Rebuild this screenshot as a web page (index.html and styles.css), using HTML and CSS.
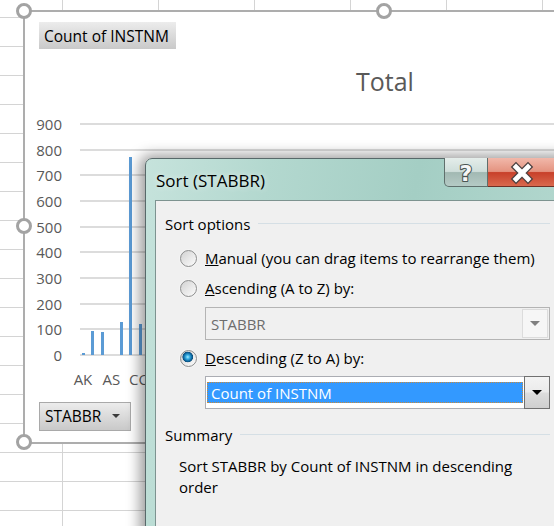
FILE: index.html
```html
<!DOCTYPE html>
<html lang="en">
<head>
    <meta charset="UTF-8">
    <meta name="viewport" content="width=device-width, initial-scale=1.0">
    <title>Sort (STABBR)</title>
    <link rel="stylesheet" href="styles.css">
</head>
<body>

    <div class="sheet">

        <!-- Pivot chart floating on the worksheet -->
        <div class="chart">
            <span class="handle handle-tl"></span>
            <span class="handle handle-tc"></span>
            <span class="handle handle-ml"></span>
            <span class="handle handle-bl"></span>

            <div class="field-btn">Count of INSTNM</div>
            <div class="chart-title">Total</div>

            <div class="axis">
                <div class="axis-row"><span class="axis-label">900</span><span class="grid-line"></span></div>
                <div class="axis-row"><span class="axis-label">800</span><span class="grid-line"></span></div>
                <div class="axis-row"><span class="axis-label">700</span><span class="grid-line"></span></div>
                <div class="axis-row"><span class="axis-label">600</span><span class="grid-line"></span></div>
                <div class="axis-row"><span class="axis-label">500</span><span class="grid-line"></span></div>
                <div class="axis-row"><span class="axis-label">400</span><span class="grid-line"></span></div>
                <div class="axis-row"><span class="axis-label">300</span><span class="grid-line"></span></div>
                <div class="axis-row"><span class="axis-label">200</span><span class="grid-line"></span></div>
                <div class="axis-row"><span class="axis-label">100</span><span class="grid-line"></span></div>
                <div class="axis-row"><span class="axis-label">0</span><span class="grid-line"></span></div>

                <div class="bars">
                    <div class="bar-slot"><span class="bar" style="height:2px"></span></div>
                    <div class="bar-slot"><span class="bar" style="height:24px"></span></div>
                    <div class="bar-slot"><span class="bar" style="height:23px"></span></div>
                    <div class="bar-slot"><span class="bar" style="height:0px"></span></div>
                    <div class="bar-slot"><span class="bar" style="height:33px"></span></div>
                    <div class="bar-slot"><span class="bar" style="height:198px"></span></div>
                    <div class="bar-slot"><span class="bar" style="height:31px"></span></div>
                    <div class="bar-slot"><span class="bar" style="height:10px"></span></div>
                    <div class="bar-slot"><span class="bar" style="height:40px"></span></div>
                </div>
            </div>

            <div class="x-labels">
                <span>AK</span><span>AS</span><span>CO</span><span>FL</span><span>GU</span>
            </div>

            <div class="field-btn field-btn-drop">STABBR <span class="caret"></span></div>
        </div>

        <!-- Sort dialog -->
        <div class="dialog">
            <div class="titlebar">
                <span class="title">Sort (STABBR)</span>
                <div class="caption-btns">
                    <span class="cap-btn cap-help">
                        <svg width="44" height="28" viewBox="0 0 44 28">
                            <text x="21" y="23" text-anchor="middle" font-family="DejaVu Sans, sans-serif" font-weight="bold" font-size="22" fill="#f6f6f6" stroke="#4a5553" stroke-width="2.2" stroke-linejoin="round" paint-order="stroke">?</text>
                        </svg>
                    </span>
                    <span class="cap-btn cap-close">
                        <svg width="70" height="28" viewBox="0 0 70 28">
                            <path d="M28 9 L40 21 M40 9 L28 21" stroke="#4a3f3f" stroke-width="7.4" stroke-linecap="square"/>
                            <path d="M28 9 L40 21 M40 9 L28 21" stroke="#ffffff" stroke-width="4.8" stroke-linecap="square"/>
                        </svg>
                    </span>
                </div>
            </div>

            <div class="client">
                <div class="group-head"><span>Sort options</span><span class="rule"></span></div>

                <div class="option option-first"><span class="radio"></span><span><u>M</u>anual (you can drag items to rearrange them)</span></div>
                <div class="option"><span class="radio"></span><span><u>A</u>scending (A to Z) by:</span></div>
                <div class="combo combo-disabled">
                    <span class="combo-text">STABBR</span>
                    <span class="combo-btn"><span class="tri"></span></span>
                </div>

                <div class="option option-after-combo"><span class="radio radio-on"></span><span><u>D</u>escending (Z to A) by:</span></div>
                <div class="combo combo-focus">
                    <span class="combo-text"><span class="selected">Count of INSTNM</span></span>
                    <span class="combo-btn"><span class="tri"></span></span>
                </div>

                <div class="group-head group-summary"><span>Summary</span><span class="rule"></span></div>
                <p class="summary">Sort STABBR by Count of INSTNM in descending<br>order</p>
            </div>
        </div>

    </div>

</body>
</html>
```

FILE: styles.css
```css
/* Basic reset */
* {
    margin: 0;
    padding: 0;
    box-sizing: border-box;
}

body {
    width: 554px;
    height: 526px;
    overflow: hidden;
    background: #ffffff;
    font-family: "Open Sans", "Noto Sans", sans-serif;
}

/* Worksheet with cell gridlines */
.sheet {
    position: relative;
    width: 554px;
    height: 526px;
    overflow: hidden;
    background-color: #ffffff;
    background-image:
        linear-gradient(to right, #d4d4d4 1px, transparent 1px),
        linear-gradient(to bottom, #d4d4d4 1px, transparent 1px);
    background-size: 96px 29px;
    background-position: 62px 17px;
}

/* Chart object */
.chart {
    position: absolute;
    left: 23px;
    top: 10px;
    width: 723px;
    height: 434px;
    background: #ffffff;
    border: 2px solid #adadad;
}

.handle {
    position: absolute;
    width: 16px;
    height: 16px;
    border-radius: 50%;
    border: 3px solid #a3a3a3;
    background: #ffffff;
}

.handle-tl { left: -9px; top: -9px; }
.handle-tc { left: 351px; top: -9px; }
.handle-ml { left: -9px; top: 206px; }
.handle-bl { left: -9px; top: 422px; }

.field-btn {
    display: inline-flex;
    align-items: center;
    margin: 10px 0 0 14px;
    height: 27px;
    padding: 0 7px 0 5px;
    font-size: 15.5px;
    color: #000;
    background: linear-gradient(to bottom, #ececec, #c9c9c9);
}

.chart-title {
    margin: 17px 0 0 331px;
    height: 30px;
    line-height: 30px;
    font-size: 25px;
    color: #595959;
}

/* Value axis and plot */
.axis {
    position: relative;
    margin-top: 15px;
}

.axis-row {
    display: flex;
    align-items: center;
    height: 25.7px;
}

.axis-label {
    width: 37px;
    text-align: right;
    font-size: 15px;
    color: #595959;
}

.grid-line {
    flex: 1;
    height: 2px;
    margin-left: 18px;
    background: #dcdcdc;
}

.bars {
    position: absolute;
    left: 53.8px;
    bottom: 12.85px;
    display: flex;
    align-items: flex-end;
}

.bar-slot {
    display: flex;
    justify-content: center;
    width: 9.45px;
}

.bar {
    width: 3px;
    background: #5b9bd5;
}

.x-labels {
    display: flex;
    margin: 1px 0 0 43.8px;
    height: 20px;
    line-height: 20px;
}

.x-labels span {
    width: 28.35px;
    text-align: center;
    font-size: 15px;
    color: #595959;
}

.field-btn-drop {
    margin-top: 13px;
    height: 29px;
    padding: 0 10px 0 5px;
    border: 1px solid #a9a9a9;
    gap: 11px;
}

.caret {
    width: 0;
    height: 0;
    border-left: 4px solid transparent;
    border-right: 4px solid transparent;
    border-top: 4px solid #3c3c3c;
}

/* Sort dialog window */
.dialog {
    position: absolute;
    left: 145px;
    top: 158px;
    width: 431px;
    height: 400px;
    border: 1px solid #58696a;
    border-radius: 7px 7px 0 0;
    background: linear-gradient(100deg, #c6e3dc 0%, #b3d8cf 25%, #a4cec4 55%, #b8dbd2 100%);
    box-shadow: -2px 0 14px 3px rgba(0, 0, 0, 0.4);
}

.titlebar {
    display: flex;
    height: 41px;
}

.title {
    flex: 1;
    padding: 10px 0 0 10px;
    font-size: 17px;
    color: #000;
    text-shadow: 0 0 6px rgba(255, 255, 255, 0.8);
}

.caption-btns {
    display: flex;
    align-self: flex-start;
    margin: -1px 17px 0 0;
}

.cap-btn {
    display: block;
    height: 29px;
    border: 1px solid #5f6f6c;
    border-top: none;
}

.cap-help {
    width: 44px;
    border-radius: 0 0 0 5px;
    background: linear-gradient(to bottom, #e4edea 0%, #cfdeda 48%, #a2b9b3 52%, #b5cac5 100%);
}

.cap-close {
    width: 70px;
    border-left: none;
    border-color: #6e2f25;
    background: linear-gradient(to bottom, #f1b8aa 0%, #e49380 48%, #c8402a 52%, #d9694e 100%);
}

.cap-btn svg {
    display: block;
}

.client {
    height: 400px;
    margin: 0 9px;
    padding: 13px 15px 0 9px;
    border: 1px solid #7d9390;
    background: #f0f0f0;
    font-size: 15px;
    color: #000;
}

.group-head {
    display: flex;
    align-items: center;
    height: 20px;
}

.rule {
    flex: 1;
    height: 1px;
    margin: 0 0 2px 8px;
    background: #d5dfe5;
}

.option {
    display: flex;
    align-items: center;
    gap: 8px;
    height: 20px;
    margin: 10px 0 0 15px;
}

.option-first {
    margin-top: 14px;
}

.option-after-combo {
    margin-top: 8px;
}

.radio {
    width: 17px;
    height: 17px;
    border-radius: 50%;
    border: 1px solid #8d8e8e;
    background: linear-gradient(135deg, #d2d2d2, #fcfcfc);
    box-shadow: 0 0 0 1px #f4f4f4;
}

.radio-on {
    background:
        radial-gradient(circle at 45% 40%, #a8ecff 0, #37aee3 2px, #0f6aa3 4px, #0c4f7c 5px, transparent 5.6px),
        linear-gradient(135deg, #d2d2d2, #fcfcfc);
}

.combo {
    display: flex;
    height: 33px;
    margin: 9px 0 0 40px;
    border: 1px solid #abadb3;
    background: #ffffff;
}

.combo-disabled {
    background: #f0f0f0;
    border-color: #b4b4b4;
    color: #6d6d6d;
}

.combo-text {
    flex: 1;
    display: flex;
    align-items: center;
    padding-left: 5px;
}

.combo-focus {
    margin-top: 8px;
}

.combo-focus .combo-text {
    padding: 5px 1px 5px 1px;
}

.selected {
    display: flex;
    align-items: center;
    width: 100%;
    height: 100%;
    padding-left: 4px;
    color: #ffffff;
    background: #3399ff;
    outline: 1px dotted #c98a3a;
    outline-offset: -1px;
}

.combo-btn {
    display: flex;
    align-items: center;
    justify-content: center;
    width: 26px;
    margin: 1px 1px 1px 0;
    border: 1px solid #dcdcdc;
    background: #f6f6f6;
}

.combo-focus .combo-btn {
    margin: -1px -1px -1px 0;
    border-color: #707070;
    background: linear-gradient(to bottom, #f3f3f3 0%, #ebebeb 48%, #dddddd 52%, #cfcfcf 100%);
}

.tri {
    width: 0;
    height: 0;
    border-left: 5px solid transparent;
    border-right: 5px solid transparent;
    border-top: 5px solid #808080;
}

.combo-focus .tri {
    border-top-color: #000;
}

.group-summary {
    margin-top: 16px;
}

.summary {
    margin: 11px 0 0 14px;
    line-height: 21px;
}
```
